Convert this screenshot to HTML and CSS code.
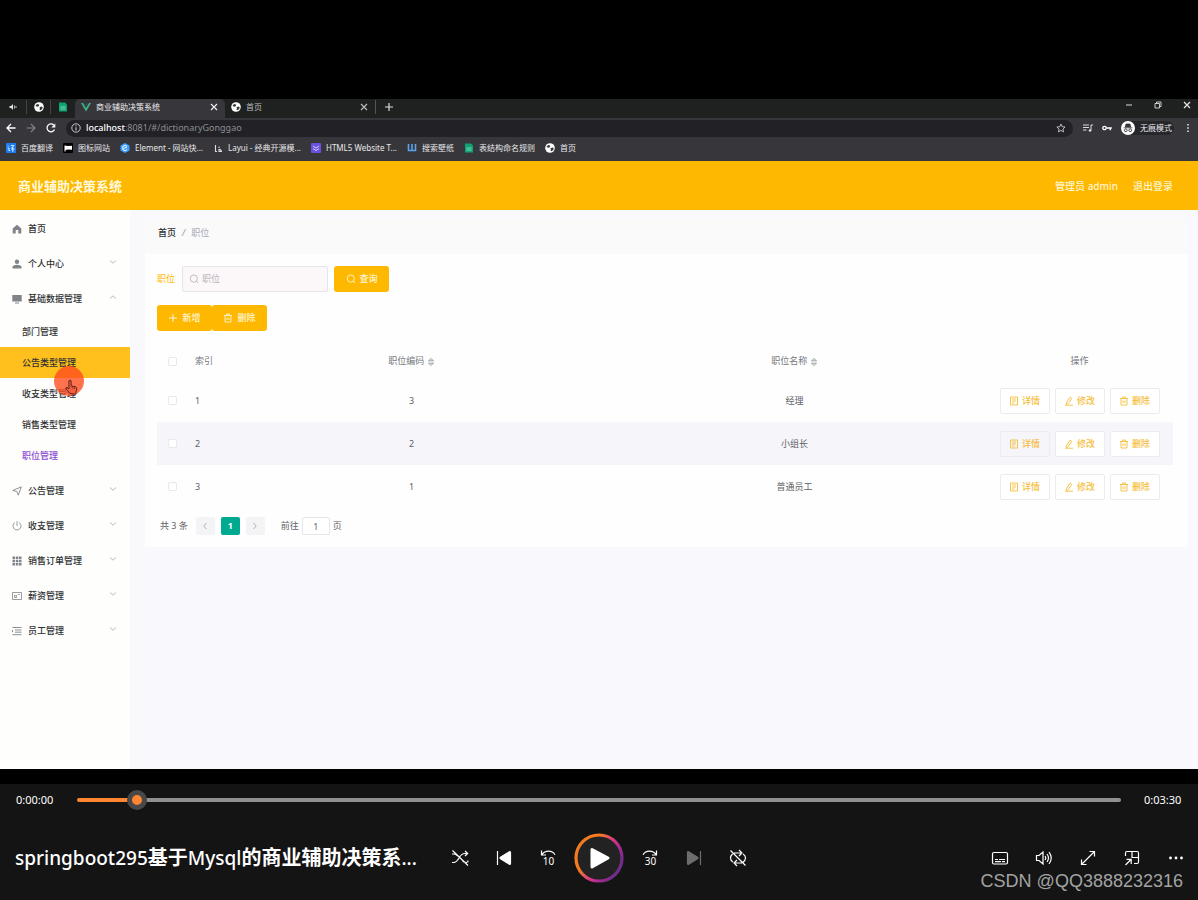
FILE: index.html
```html
<!DOCTYPE html>
<html lang="zh-CN">
<head>
<meta charset="utf-8">
<title>商业辅助决策系统</title>
<link rel="stylesheet" href="styles.css">
</head>
<body>
<svg class="defs" aria-hidden="true">
  <symbol id="globe" viewBox="0 0 10 10"><circle cx="5" cy="5" r="4.8" fill="#fff"/><path d="M1.500 3.200 3.500 2l1.800.8-.8 1.700-1.700.3zM5.500 5.200l2-.7 1.200.8-.5 1.700-1.500 1.300-1.200-.6.4-1.300z" fill="#35363a"/></symbol>
  <symbol id="sheet" viewBox="0 0 10 10"><path d="M1 .5h6L9 2.500v7H1z" fill="#0fa373"/><path d="M2.500 5h5M2.500 7h5" stroke="#9be3c8" stroke-width=".8"/></symbol>
  <symbol id="close" viewBox="0 0 10 10"><path d="M2 2l6 6M8 2 2 8" stroke="currentColor" stroke-width="1.200"/></symbol>
  <symbol id="down" viewBox="0 0 8 8"><path d="M1 2.500 4 5.200 7 2.500" fill="none" stroke="currentColor" stroke-width=".9"/></symbol>
  <symbol id="search" viewBox="0 0 10 10"><circle cx="4.800" cy="4.600" r="3.600" fill="none" stroke="currentColor" stroke-width=".9"/><path d="m7.300 7.200 1.700 1.900" stroke="currentColor" stroke-width=".9"/></symbol>
  <symbol id="trash" viewBox="0 0 10 10"><path d="M1 2.500h8M3.500 2.500V1h3v1.500M2 2.500V9h6V2.500M4 4.500v2.500M6 4.500v2.500" fill="none" stroke="currentColor" stroke-width=".9"/></symbol>
  <symbol id="doc" viewBox="0 0 10 10"><path d="M1.500 1h7v8h-7zM3 3h4M3 5h4M3 7h2.500" fill="none" stroke="currentColor" stroke-width=".9"/></symbol>
  <symbol id="edit" viewBox="0 0 10 10"><path d="M2.500 6.500 6 1.200l1.800 1.200L4.300 7.500 2.200 8.300zM1 9.200h8" fill="none" stroke="currentColor" stroke-width=".9"/></symbol>
  <symbol id="sort" viewBox="0 0 8 10"><path d="M1.500 3.800 4 1.500l2.500 2.300zM1.500 6.200 4 8.500l2.500-2.300z" fill="none" stroke="currentColor" stroke-width=".7"/></symbol>
</svg>

<main class="stage">
  <section class="browser">
    <div class="tabs">
      <span class="pin"><svg viewBox="0 0 10 10"><path d="M1.500 4h1.500L5 2v6L3 6H1.500z" fill="#ddd"/><path d="M6.500 3.500v3M8 4v2" stroke="#ddd" stroke-width=".8"/></svg></span>
      <span class="pin"><svg><use href="#globe"/></svg></span>
      <span class="pin"><svg><use href="#sheet"/></svg></span>
      <div class="tab tab-active">
        <svg viewBox="0 0 10 10"><path d="M0 1h2l3 5 3-5h2L5 9.500z" fill="#41b883"/><path d="M2 1h1.800L5 3l1.200-2H8L5 6z" fill="#35495e"/></svg>
        <span>商业辅助决策系统</span>
        <button class="ghost" aria-label="关闭标签页"><svg><use href="#close"/></svg></button>
      </div>
      <div class="tab">
        <svg><use href="#globe"/></svg>
        <span>首页</span>
        <button class="ghost" aria-label="关闭标签页"><svg><use href="#close"/></svg></button>
      </div>
      <button class="ghost add" aria-label="新标签页"><svg viewBox="0 0 10 10"><path d="M5 1v8M1 5h8" stroke="#ddd" stroke-width="1.200"/></svg></button>
      <div class="window">
        <button class="ghost" aria-label="最小化"><svg viewBox="0 0 10 10"><path d="M2 5h6" stroke="#ddd"/></svg></button>
        <button class="ghost" aria-label="还原"><svg viewBox="0 0 10 10"><path d="M2 3.500h4.500V8H2zM3.500 3.500V2H8v4.500H6.500" fill="none" stroke="#ddd" stroke-width=".9"/></svg></button>
        <button class="ghost" aria-label="关闭"><svg><use href="#close"/></svg></button>
      </div>
    </div>
    <div class="toolbar">
      <button class="ghost" aria-label="后退"><svg viewBox="0 0 10 10"><path d="M9.500 5H1.200M5 1 1 5l4 4" fill="none" stroke="#fff" stroke-width="1.300"/></svg></button>
      <button class="ghost" aria-label="前进"><svg viewBox="0 0 10 10"><path d="M.5 5h8.300M5 1l4 4-4 4" fill="none" stroke="#85868a" stroke-width="1.100"/></svg></button>
      <button class="ghost" aria-label="刷新"><svg viewBox="0 0 10 10"><path d="M8.500 6.500A3.900 3.900 0 1 1 7.800 2.200" fill="none" stroke="#fff" stroke-width="1.300"/><path d="M9.300.5v4h-4z" fill="#fff"/></svg></button>
      <div class="omnibox">
        <svg viewBox="0 0 10 10"><circle cx="5" cy="5" r="4.200" fill="none" stroke="#ddd" stroke-width=".9"/><path d="M5 4.300V7.500M5 2.400v1" stroke="#ddd"/></svg>
        <span class="url"><b>localhost</b>:8081/#/dictionaryGonggao</span>
        <svg viewBox="0 0 10 10"><path d="m5 1 1.200 2.700 2.900.3-2.200 2 .7 2.900L5 7.400 2.400 8.900 3.100 6 .9 4l2.900-.3z" fill="none" stroke="#ddd" stroke-width=".8"/></svg>
      </div>
      <div class="tools">
        <svg viewBox="0 0 10 10"><path d="M0 2h6M0 4.500h6M0 7h3.500M8 7.500V2h2" fill="none" stroke="#ddd"/><circle cx="7" cy="7.500" r="1.300" fill="#ddd"/></svg>
        <svg viewBox="0 0 10 10"><circle cx="2.500" cy="5" r="1.700" fill="none" stroke="#fff" stroke-width="1.300"/><path d="M4.500 5h5.300M8.300 5v2.200" stroke="#fff" stroke-width="1.400"/></svg>
        <span class="incognito"><svg viewBox="0 0 14 14"><circle cx="7" cy="7" r="7" fill="#fff"/><path d="M4.300 6 5 3h4l.7 3zM2.500 6.800h9" stroke="#35363a" stroke-width=".8" fill="#35363a"/><circle cx="4.800" cy="9.300" r="1.400" fill="none" stroke="#35363a" stroke-width=".9"/><circle cx="9.200" cy="9.300" r="1.400" fill="none" stroke="#35363a" stroke-width=".9"/></svg>无痕模式</span>
        <svg viewBox="0 0 10 10"><path d="M4.300 1h1.500v1.500H4.300zM4.300 4.300h1.500v1.500H4.300zM4.300 7.500h1.500V9H4.300z" fill="#eee"/></svg>
      </div>
    </div>
    <nav class="bookmarks" aria-label="书签">
      <a href="#"><svg viewBox="0 0 10 10"><rect width="10" height="10" rx="1" fill="#1c7cf0"/><path d="M2 2.500l1 1M1.500 5H3v3l1-1M5 2.500h3L5.500 5M5 6h3.500M6.800 4v5" fill="none" stroke="#fff" stroke-width=".8"/></svg>百度翻译</a>
      <a href="#"><svg viewBox="0 0 10 10"><rect width="10" height="10" rx="1" fill="#000"/><path d="M1.500 2.500 5 3l4-.3v4L5 6.500 2.500 7v1.500h-1z" fill="#fff"/></svg>图标网站</a>
      <a href="#"><svg viewBox="0 0 10 10"><path d="m5 0 4.500 2.500v5L5 10 .5 7.500v-5z" fill="#409eff"/><path d="M7 3.300 5 2.300 2.800 3.500v3L5 7.700l2-1M3.500 5.500 7 4" fill="none" stroke="#fff" stroke-width=".9"/></svg>Element - 网站快...</a>
      <a href="#"><svg viewBox="0 0 10 10"><path d="M2.500 2v6.500H4M6 3.500V5M6 6v2.500h3M6.500 6 8.500 8" fill="none" stroke="#ddd" stroke-width="1.100"/></svg>Layui - 经典开源模...</a>
      <a href="#"><svg viewBox="0 0 10 10"><rect width="10" height="10" rx="1" fill="#6a52e0"/><path d="m2 3 3 2 3-2M2 5.500l3 2 3-2" fill="none" stroke="#d6c9ff"/></svg>HTML5 Website T...</a>
      <a href="#"><svg viewBox="0 0 10 10"><path d="M1.500 1v6.500H8.500V1M5 1v6" fill="none" stroke="#5ba4e8" stroke-width="1.600"/></svg>搜索壁纸</a>
      <a href="#"><svg><use href="#sheet"/></svg>表结构命名规则</a>
      <a href="#"><svg><use href="#globe"/></svg>首页</a>
    </nav>
  </section>

  <header class="app-header">
    <h1>商业辅助决策系统</h1>
    <span>管理员 admin</span>
    <a href="#">退出登录</a>
  </header>

  <div class="app">
    <nav class="side">
      <a class="item" href="#"><svg viewBox="0 0 10 10"><path d="M5 .8 9.300 4.500V9.500H6.300V6H3.700v3.500H.7v-5z" fill="#808387"/></svg>首页</a>
      <a class="item" href="#"><svg viewBox="0 0 10 10"><circle cx="5" cy="2.800" r="2.200" fill="#808387"/><path d="M.5 9.500V7.300Q2 5.800 5 5.800t4.500 1.500v2.200z" fill="#808387"/></svg>个人中心<svg class="arrow"><use href="#down"/></svg></a>
      <a class="item" href="#"><svg viewBox="0 0 10 10"><path d="M.3 1h9.400v6.500H.3zM3 8.500h4v1H3z" fill="#808387"/></svg>基础数据管理<svg class="arrow arrow-up"><use href="#down"/></svg></a>
      <div class="sub">
        <a href="#">部门管理</a>
        <a class="hovered" href="#">公告类型管理
          <svg class="pointer" viewBox="0 0 30 30"><circle cx="15" cy="15" r="15" fill="#ff4a1c" fill-opacity=".78"/><path d="M16 27.500 12 23q-.9-1.700.9-1.500l2 1.300v-8q1.200-1.500 2.200 0v5l4.500 1q1.300.4 1.200 2l-.9 3.500v2z" fill="#f0603f" stroke="#4d1c18" stroke-width=".9"/><path d="M18.300 20.500v2M20.300 21v2" stroke="#4d1c18" stroke-width=".6"/></svg>
        </a>
        <a href="#">收支类型管理</a>
        <a href="#">销售类型管理</a>
        <a class="current" href="#">职位管理</a>
      </div>
      <a class="item" href="#"><svg viewBox="0 0 10 10"><path d="M.8 4.500 9.300.8 6.300 9.200 4.800 5.500z" fill="none" stroke="#808387" stroke-width=".9"/></svg>公告管理<svg class="arrow"><use href="#down"/></svg></a>
      <a class="item" href="#"><svg viewBox="0 0 10 10"><path d="M3 1.500a4 4 0 1 0 4 0M5 .3V5" fill="none" stroke="#808387" stroke-width=".8"/></svg>收支管理<svg class="arrow"><use href="#down"/></svg></a>
      <a class="item" href="#"><svg viewBox="0 0 10 10"><path d="M.5.500h2.500v2.500H.5zM3.800.500h2.500v2.500H3.800zM7 .500h2.500v2.500H7zM.5 3.800h2.500v2.500H.5zM3.800 3.800h2.500v2.500H3.800zM7 3.800h2.500v2.500H7zM.5 7h2.500v2.500H.5zM3.800 7h2.500v2.500H3.800zM7 7h2.500v2.500H7z" fill="#808387"/></svg>销售订单管理<svg class="arrow"><use href="#down"/></svg></a>
      <a class="item" href="#"><svg viewBox="0 0 10 10"><path d="M.5 1.500h9v7h-9zM2.500 4.500h2v2h-2zM6 3.500h1.800" fill="none" stroke="#808387" stroke-width=".8"/></svg>薪资管理<svg class="arrow"><use href="#down"/></svg></a>
      <a class="item" href="#"><svg viewBox="0 0 10 10"><path d="M.5 1.500h9M3 4h6.500M3 6.200h6.500M.5 8.700h9M.5 4v2.200" stroke="#808387" stroke-width=".9"/></svg>员工管理<svg class="arrow"><use href="#down"/></svg></a>
    </nav>

    <div class="content">
      <div class="crumbs"><b>首页</b><i>/</i><span>职位</span></div>
      <section class="card">
        <form class="filter">
          <label for="post">职位</label>
          <div class="field"><svg><use href="#search"/></svg><input id="post" type="text" placeholder="职位"></div>
          <button class="btn" type="button"><svg><use href="#search"/></svg>查询</button>
        </form>
        <div class="actions">
          <button class="btn"><svg viewBox="0 0 10 10"><path d="M5 1v8M1 5h8" stroke="#fff" stroke-width=".9"/></svg>新增</button><button class="btn"><svg><use href="#trash"/></svg>删除</button>
        </div>
        <table>
          <colgroup><col class="c-check"><col class="c-index"><col><col><col class="c-ops"></colgroup>
          <thead><tr><th><input type="checkbox" aria-label="全选"></th><th class="left">索引</th><th>职位编码 <svg><use href="#sort"/></svg></th><th>职位名称 <svg><use href="#sort"/></svg></th><th>操作</th></tr></thead>
          <tbody>
            <tr><td><input type="checkbox" aria-label="选择 1"></td><td class="left">1</td><td>3</td><td>经理</td><td><div class="ops"><button><svg><use href="#doc"/></svg>详情</button><button><svg><use href="#edit"/></svg>修改</button><button><svg><use href="#trash"/></svg>删除</button></div></td></tr>
            <tr class="striped"><td><input type="checkbox" aria-label="选择 2"></td><td class="left">2</td><td>2</td><td>小组长</td><td><div class="ops"><button class="dim"><svg><use href="#doc"/></svg>详情</button><button><svg><use href="#edit"/></svg>修改</button><button><svg><use href="#trash"/></svg>删除</button></div></td></tr>
            <tr><td><input type="checkbox" aria-label="选择 3"></td><td class="left">3</td><td>1</td><td>普通员工</td><td><div class="ops"><button><svg><use href="#doc"/></svg>详情</button><button><svg><use href="#edit"/></svg>修改</button><button><svg><use href="#trash"/></svg>删除</button></div></td></tr>
          </tbody>
        </table>
        <div class="pager">
          <span>共 3 条</span>
          <div class="pages">
            <button aria-label="上一页"><svg class="prev"><use href="#down"/></svg></button>
            <button class="on">1</button>
            <button aria-label="下一页"><svg class="next"><use href="#down"/></svg></button>
          </div>
          <label>前往<input type="text" value="1">页</label>
        </div>
      </section>
    </div>
  </div>
</main>

<footer class="player">
  <div class="timeline">
    <span>0:00:00</span>
    <input type="range" min="0" max="1024" value="50" aria-label="播放进度">
    <span>0:03:30</span>
  </div>
  <div class="controls">
    <h2><span class="latin">springboot295</span>基于<span class="latin">Mysql</span>的商业辅助决策系<span class="latin">...</span></h2>
    <div class="group">
      <button class="ctl" aria-label="随机播放"><svg viewBox="0 0 18 18"><path d="M1 13.500h1.500q3 0 5.500-4.500t6-4.500h2.500M1 5h2q2 0 3.500 2M11.500 12q1.500 1.500 4.500 1.500M14 2l2.700 2.500L14 7M16.800 11.500v2M1.500 1.500 17 16.500"/></svg></button>
      <button class="ctl" aria-label="上一个"><svg viewBox="0 0 18 18"><path d="M2.500 2v14"/><path d="M15.500 3.500v11q0 1.200-1.200.7L5.500 9.700q-1-.7 0-1.400l8.800-5.500q1.200-.5 1.200.7z" fill="#fff"/></svg></button>
      <button class="ctl" aria-label="后退 10 秒"><svg viewBox="0 0 18 18"><path d="M2.500 1.500V6H7M2.800 5.700Q5.500 2.200 9.500 2.200q4.300 0 6.500 3.500"/><text x="9.500" y="16">10</text></svg></button>
      <button class="ctl play" aria-label="播放"><svg viewBox="0 0 50 50"><defs><linearGradient id="ring" x1="0" y1="0.200" x2="1" y2="0.800"><stop offset=".3" stop-color="#f47b20"/><stop offset=".55" stop-color="#d83a83"/><stop offset=".7" stop-color="#b02a91"/><stop offset=".9" stop-color="#702d89"/></linearGradient></defs><circle cx="25" cy="25" r="23" fill="#222" stroke="url(#ring)" stroke-width="3.200"/><path d="M18 16.500v17.500l16-9z" fill="#fff" stroke="#fff" stroke-width="3" stroke-linejoin="round"/></svg></button>
      <button class="ctl" aria-label="前进 30 秒"><svg viewBox="0 0 18 18"><path d="M15.500 1.500V6H11M15.200 5.700Q12.500 2.200 8.500 2.200 4.200 2.200 2 5.700"/><text x="9.500" y="16">30</text></svg></button>
      <button class="ctl" aria-label="下一个" disabled><svg viewBox="0 0 18 18"><path d="M15.500 2v14" stroke="#6d6d6d"/><path d="M2.500 3.500v11q0 1.200 1.200.7l8.800-5.500q1-.7 0-1.400L3.700 2.800q-1.200-.5-1.200.7z" fill="#6d6d6d" stroke="#6d6d6d"/></svg></button>
      <button class="ctl" aria-label="循环播放"><svg viewBox="0 0 18 18"><path d="M5 4h7M10 1l3 3-3 3M14 5q2.500 1.500 2.500 4t-2.700 4.500M13 14H6M8 11l-3 3 3 3M4 13Q1.500 11.500 1.500 9q0-2.200 2-4M1.500 1.500l15 15"/></svg></button>
    </div>
    <div class="group group-end">
      <button class="ctl" aria-label="字幕"><svg viewBox="0 0 18 18"><rect x="1.500" y="3.500" width="15" height="11.500" rx="1.500"/><path d="M4 10.500h3M8 10.500h6M4 12.700h6M11 12.700h3"/></svg></button>
      <button class="ctl" aria-label="音量"><svg viewBox="0 0 18 18"><path d="M1.500 6.500H4L8 3v12l-4-3.500H1.500zM10 7q1.500 2 0 4M12 5q3 4 0 8M14 3.200q4.500 5.800 0 11.600"/></svg></button>
      <button class="ctl" aria-label="全屏"><svg viewBox="0 0 18 18"><path d="M2.500 15.500l13-13M10.500 2.500h5v5M2.500 10.500v5h5"/></svg></button>
      <button class="ctl" aria-label="迷你播放器"><svg viewBox="0 0 18 18"><path d="M2.500 7V4q0-1.500 1.500-1.500h10q1.500 0 1.500 1.500v9q0 1.500-1.500 1.500h-3M9 2.500v6h6.500M2.500 16l5.500-5.500M3.500 10.300h4.700V15"/></svg></button>
      <button class="ctl" aria-label="更多"><svg viewBox="0 0 18 18"><path d="M3.500 9h.01M9 9h.01M14.500 9h.01" stroke-width="2.800" stroke-linecap="round"/></svg></button>
    </div>
  </div>
  <div class="watermark">CSDN @QQ3888232316</div>
</footer>
</body>
</html>
```

FILE: styles.css
```css
* { box-sizing: border-box; }
body {
  margin: 0;
  min-height: 100vh;
  display: flex;
  flex-direction: column;
  background: #000;
  font-family: "Noto Sans", "Noto Sans CJK SC", sans-serif;
  font-size: 9px;
  line-height: 12px;
}
button, input { font: inherit; color: inherit; }
button { padding: 0; border: 0; background: none; }
a { color: inherit; text-decoration: none; }
svg { width: 10px; height: 10px; flex: none; }
.defs { position: absolute; width: 0; height: 0; }

.stage {
  flex: 1;
  display: flex;
  flex-direction: column;
  padding: 99px 0 15px;
}

/* Browser window */
.browser { background: #37363b; color: #e8e8ea; font-size: 8px; }
.ghost { display: flex; }
.tabs { display: flex; height: 19px; background: #1e211f; }
.pin { width: 24px; display: flex; align-items: center; justify-content: center; margin: 1px 0 4px; border-right: 1px solid #444; }
.pin:first-child { width: 27px; }
.pin:nth-child(3) { border: 0; }
.tab { width: 150px; display: flex; align-items: center; gap: 5px; padding: 0 6px 3px; color: #bbb; }
.tab span { flex: 1; }
.tab-active { background: #37363b; color: #eee; border-radius: 5px 5px 0 0; }
.add { align-items: center; padding: 0 8px; margin: 1px 0 4px; border-left: 1px solid #555; }
.window { margin-left: auto; display: flex; gap: 19px; padding: 1px 6px 0; }
.toolbar { display: flex; align-items: center; height: 20px; padding: 0 5px 0 6px; gap: 10px; }
.omnibox {
  flex: 1;
  display: flex;
  align-items: center;
  gap: 5px;
  height: 17px;
  padding: 0 7px 0 5px;
  border-radius: 9px;
  background: #212126;
  font-size: 9px;
}
.url { flex: 1; color: #8d8e93; }
.url b { color: #fff; font-weight: 500; }
.tools { display: flex; align-items: center; gap: 9px; }
.incognito { display: flex; align-items: center; gap: 5px; padding-right: 2px; border-radius: 8px; background: #26272b; }
.incognito svg { width: 14px; height: 14px; }
.bookmarks { display: flex; align-items: center; gap: 10px; height: 23px; padding: 0 6px 3px; white-space: nowrap; }
.bookmarks a { display: flex; align-items: center; gap: 5px; }

/* Application */
.app-header {
  display: flex;
  align-items: center;
  gap: 15px;
  height: 49px;
  padding: 0 25px 0 18px;
  background: #ffb800;
  color: #fff5cf;
  font-size: 10px;
  font-weight: 500;
}
.app-header h1 { flex: 1; margin: 0; color: #fff8dc; font-size: 13px; line-height: 18px; }
.app { flex: 1; display: flex; background: #f8f8fd; color: #606266; }
.side { width: 130px; padding-top: 1px; background: #fefefd; color: #303133; font-weight: 500; }
.item { display: flex; align-items: center; gap: 6px; height: 35px; padding: 0 13px 0 12px; }
.arrow { width: 8px; height: 8px; margin: 0 0 3px auto; color: #b0b2b8; }
.arrow-up { transform: rotate(180deg); }
.sub { padding-bottom: 2px; }
.sub a { position: relative; display: flex; align-items: center; height: 31px; padding-left: 22px; }
.sub .hovered { background: #ffc01e; }
.sub .current { color: #8a4bd0; }
.pointer { position: absolute; z-index: 1; left: 54px; top: 19px; width: 30px; height: 30px; }

.content { flex: 1; min-width: 0; padding: 8px 10px 20px 15px; }
.crumbs { display: flex; align-items: center; gap: 6px; height: 36px; padding: 0 13px 7px; background: #fafafa; }
.crumbs b { color: #303133; font-weight: 500; }
.crumbs i { color: #999; }
.crumbs span { color: #a9abb8; }
.card { padding: 12px 15px 12px 12px; background: #fefefe; }
.filter { display: flex; align-items: center; gap: 6px; }
.filter label { color: #ffb800; margin-right: 1px; }
.field { display: flex; align-items: center; gap: 3px; width: 146px; height: 26px; padding: 0 6px; border: 1px solid #e6e4ec; border-radius: 2px; background: #fcf7f8; color: #b8b5bd; }
.field input { flex: 1; min-width: 0; border: 0; padding: 0; background: none; outline: 0; }
.field input::placeholder { color: #b8b5bd; }
.btn { display: flex; align-items: center; justify-content: center; gap: 4px; width: 55px; height: 26px; border-radius: 3px; background: #ffb800; color: #fff6d6; font-weight: 500; }
.actions { display: flex; margin: 13px 0 12px; }

table { width: 100%; border-collapse: collapse; table-layout: fixed; }
.c-check { width: 31px; }
.c-index { width: 32px; }
.c-ops { width: 187px; }
th, td { padding: 0; text-align: center; font-weight: 400; }
th { height: 36px; color: #77797e; }
th svg { width: 8px; vertical-align: middle; }
td { height: 43px; }
.left { text-align: left; padding-left: 7px; }
.striped { background: #f5f5fa; }
table input { appearance: none; display: block; width: 9px; height: 9px; margin: 0 auto; border: 1px solid #e8e8ee; border-radius: 2px; background: #fff; }
.ops { display: flex; justify-content: center; gap: 5px; }
.ops button { display: flex; align-items: center; justify-content: center; gap: 3px; width: 50px; height: 26px; border: 1px solid #ececef; border-radius: 2px; background: #fff; color: #f5bd3a; font-weight: 500; }
.ops .dim { background: #f5f5fa; }

.pager { display: flex; align-items: center; gap: 8px; margin-top: 9px; padding-left: 3px; height: 18px; }
.pages { display: flex; gap: 6px; }
.pages button { display: flex; align-items: center; justify-content: center; width: 19px; height: 18px; border-radius: 2px; background: #f4f4f7; color: #a9abb0; }
.pages .on { background: #00aa91; color: #fff; font-weight: 700; }
.pages svg { width: 8px; height: 8px; }
.prev { transform: rotate(90deg); }
.next { transform: rotate(-90deg); }
.pager label { display: flex; align-items: center; gap: 3px; margin-left: 8px; }
.pager input { width: 28px; height: 18px; padding: 0; border: 1px solid #e6e6ea; border-radius: 2px; background: #fff; text-align: center; }

/* Player */
.player { position: relative; background: #141414; color: #fff; }
.timeline { display: flex; align-items: center; gap: 23px; height: 32px; padding: 0 16px; font-size: 11px; line-height: 16px; }
.timeline span { width: 38px; white-space: nowrap; }
.timeline input { flex: 1; min-width: 0; appearance: none; height: 20px; margin: 0; background: none; }
.timeline input::-webkit-slider-runnable-track { height: 4px; border-radius: 2px; background: linear-gradient(to right, #ff8533 5%, #919191 5%); }
.timeline input::-webkit-slider-thumb { appearance: none; width: 20px; height: 20px; margin-top: -8px; border: 5px solid #484848; border-radius: 50%; background: #ff8533; }
.controls { display: grid; grid-template-columns: 1fr auto 1fr; align-items: center; height: 84px; }
.controls h2 { margin: 0; padding: 0 12px 0 15px; overflow: hidden; text-overflow: ellipsis; white-space: nowrap; font-size: 20px; line-height: 28px; font-weight: 700; }
.controls .latin { font-size: 19px; font-weight: 500; }
.group { display: flex; align-items: center; }
.group-end { justify-content: flex-end; }
.ctl { display: flex; justify-content: center; width: 44px; }
.ctl svg { width: 18px; height: 18px; fill: none; stroke: #fff; stroke-width: 1.2; }
.ctl text { fill: #fff; stroke: none; font-size: 10px; text-anchor: middle; }
.play { width: 58px; }
.play svg { width: 50px; height: 50px; }
.watermark { position: absolute; right: 15px; bottom: 8px; color: #a3a3a3; font: 18px/22px "Liberation Sans", sans-serif; }
```
